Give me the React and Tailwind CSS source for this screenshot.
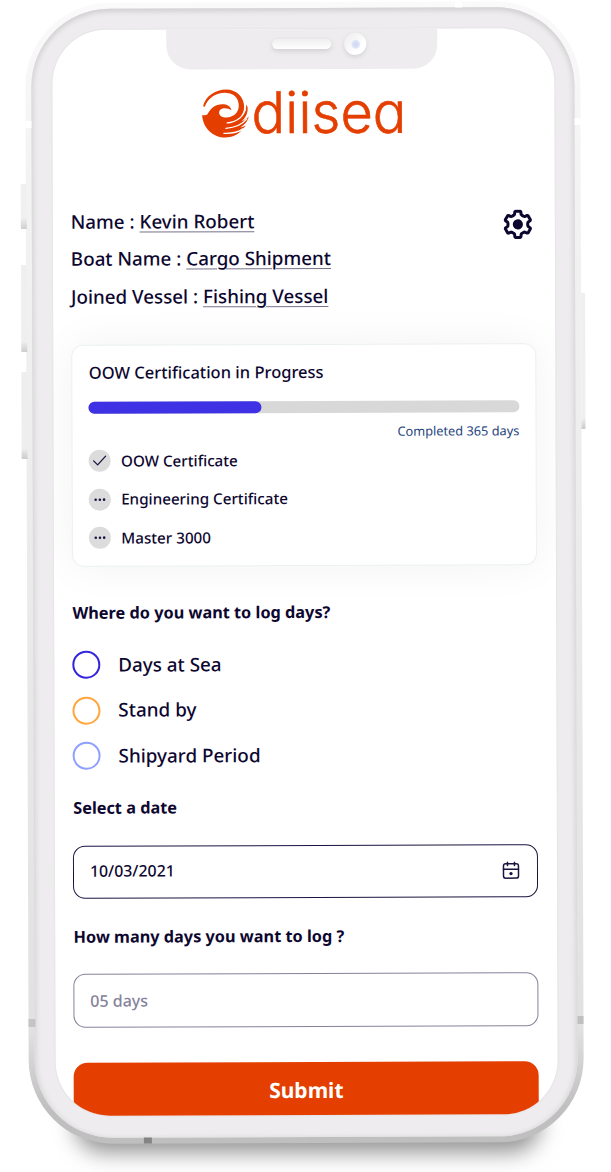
import React from "react";

const profile = [
  ["Name", "Kevin Robert"],
  ["Boat Name", "Cargo Shipment"],
  ["Joined Vessel", "Fishing Vessel"],
];

const certificates = [
  { name: "OOW Certificate", done: true },
  { name: "Engineering Certificate", done: false },
  { name: "Master 3000", done: false },
];

const dayTypes = [
  { name: "Days at Sea", ring: "border-[#3424dc]" },
  { name: "Stand by", ring: "border-[#ffa63c]" },
  { name: "Shipyard Period", ring: "border-[#8f9fff]" },
];

function LogoMark() {
  return (
    <svg viewBox="600 262 150 153" className="h-[51px] w-[50px] shrink-0" aria-hidden="true">
      <path
        fill="#e43e00"
        d="M608 316C614 286 645 266 677 266C710 266 731 290 731 318C731 330 727 339 721 346C731 337 737 326 738 311C743 318 743 330 738 342C734 350 729 357 723 362C733 357 740 352 745 348C742 361 733 372 719 380C725 379 730 377 736 374C729 384 718 390 706 394L722 390C710 403 693 410 675 410C638 410 607 382 605 342C611 343 617 343 621 340C630 322 645 310 665 310C680 310 690 316 693 328C684 321 669 319 660 326C652 334 656 346 669 349C694 353 715 339 715 314C715 291 700 277 678 276C650 274 625 288 613 317Z"
      />
      <g fill="none" stroke="#fff" strokeLinecap="round">
        <path strokeWidth="4.2" d="M680 366C705 364 727 350 735 325" />
        <path strokeWidth="3.8" d="M676 382C703 380 726 370 739 354" />
        <path strokeWidth="3.8" d="M670 397C693 398 713 394 727 384" />
      </g>
    </svg>
  );
}

const toothCorners = [
  [-4.3, -8.9],
  [-3.3, -9.8],
  [-3, -12.5],
  [-2.4, -13.1],
  [2.4, -13.1],
  [3, -12.5],
  [3.3, -9.8],
  [4.3, -8.9],
];

const gearPoints = [0, 60, 120, 180, 240, 300]
  .flatMap((deg) => {
    const a = (deg * Math.PI) / 180;
    return toothCorners.map(
      ([x, y]) =>
        `${(x * Math.cos(a) - y * Math.sin(a)).toFixed(2)},${(x * Math.sin(a) + y * Math.cos(a)).toFixed(2)}`
    );
  })
  .join(" ");

function GearIcon() {
  return (
    <svg viewBox="-15 -15 30 30" className="size-[30px]" aria-hidden="true">
      <polygon points={gearPoints} fill="none" stroke="#0d0730" strokeWidth="3" strokeLinejoin="round" />
      <circle r="5.1" fill="#0d0730" />
    </svg>
  );
}

function CalendarIcon() {
  return (
    <svg viewBox="0 0 18 18" className="size-[18px]" fill="none" stroke="#1b1440" strokeWidth="1.5" strokeLinecap="round" aria-hidden="true">
      <rect x="1.5" y="2.5" width="15" height="14.3" rx="2.2" />
      <path d="M1.5 8h15M5.5 1v3.2M12.5 1v3.2" />
      <circle cx="9" cy="12.3" r="1.7" fill="#1b1440" stroke="none" />
    </svg>
  );
}

function StatusDot({ done }) {
  return (
    <span className="flex size-[22px] items-center justify-center rounded-full bg-[#dcdcdc]">
      <svg viewBox="0 0 22 22" className="size-[22px]" aria-hidden="true">
        {done ? (
          <path d="M5 11.2L9 15.2L17 6.5" fill="none" stroke="#1b1440" strokeWidth="1.3" strokeLinecap="round" strokeLinejoin="round" />
        ) : (
          <g fill="#1b1440">
            <circle cx="6.9" cy="11" r="1.3" />
            <circle cx="11.1" cy="11" r="1.3" />
            <circle cx="15.3" cy="11" r="1.3" />
          </g>
        )}
      </svg>
    </span>
  );
}

function Hardware() {
  return (
    <>
      <div className="absolute -left-[5px] top-[181px] h-[45px] w-[5.5px] rounded-l-[1px] bg-linear-to-b from-[#f0f0f0] from-75% to-[#cfcfcf]" />
      <div className="absolute -left-[5px] top-[262px] h-[87px] w-[5.5px] rounded-l-[1px] bg-linear-to-b from-[#efefef] from-88% to-[#cdcdcd]" />
      <div className="absolute -left-[5px] top-[369px] h-[87px] w-[5.5px] rounded-l-[1px] bg-linear-to-b from-[#eeeeee] from-88% to-[#cbcbcb]" />
      <div className="absolute -right-[4px] top-[292px] h-[136px] w-[4.5px] rounded-r-[1px] bg-linear-to-b from-[#efefef] from-92% to-[#c9c9c9]" />
      <div className="absolute left-0 top-[117.5px] h-[7px] w-[6px] bg-white" />
      <div className="absolute right-0 top-[116.5px] h-[7px] w-[6px] bg-white" />
      <div className="absolute left-[430px] top-0 h-[6px] w-[7px] bg-white" />
      <div className="absolute left-0 top-[1015.5px] h-[8px] w-[6.5px] bg-[#c4c4c4]" />
      <div className="absolute right-0 top-[1014.5px] h-[8px] w-[6.5px] bg-[#c0c0c0]" />
      <div className="absolute bottom-0 left-[115px] h-[6px] w-[7.5px] bg-[#848484]" />
    </>
  );
}

function Notch() {
  return (
    <div className="absolute left-[114.3px] top-0 flex h-[40px] w-[271px] rounded-b-[24px] bg-[#eeecee] pl-[106px] pt-[9px]">
      <div className="mt-[1px] h-[10px] w-[59px] rounded-full bg-linear-to-b from-[#efeff0] to-white shadow-[0_2px_5px_#cfcdcf]" />
      <div className="-mt-[5px] ml-[13.5px] flex size-[22px] items-center justify-center rounded-full bg-linear-to-br from-[#ececec] to-white to-70% shadow-[0_2px_4px_#d3d1d3]">
        <div className="size-[9px] rounded-full bg-radial from-[#ccd3f0] to-[#eef3fd]" />
      </div>
    </div>
  );
}

export default function App() {
  return (
    <div className="relative h-[1172px] w-[611px] overflow-hidden bg-white pl-[27px] pt-[1.5px] font-['Noto_Sans',sans-serif] text-[#0d0730]">
      <div className="absolute left-[75px] top-[1095px] h-[57px] w-[465px] rounded-[40px] bg-[#8f8f8f] blur-[11px]" />
      <div className="relative h-[1140.5px] w-[555px] -rotate-[0.19deg]">
        <div className="h-full w-full rounded-[84px] p-[6px] [background-image:linear-gradient(to_bottom,#fafafa_0%,#f3f3f3_15%,#ebebeb_50%,#e1e1e1_90%,#bfbfbf_97%)]">
          <div className="h-full w-full rounded-[78px] bg-[#eeecee] px-[20.5px] pb-[22px] pt-[21.2px] shadow-[inset_0_3px_5px_#d3d1d3,inset_3px_0_4px_#e3e2e3,inset_-3px_0_4px_#e3e2e3]">
            <main className="relative flex h-full w-full flex-col overflow-hidden rounded-[54px] bg-white pl-[18.9px] pr-[18.7px] pt-[58.8px] shadow-[0_0_2px_#d8d6d8]">
              <Notch />

              <header className="flex h-[51px] items-center pl-[129.7px]">
                <LogoMark />
                <span className="ml-[1px] origin-bottom scale-y-[1.02] whitespace-nowrap font-['Inter',sans-serif] text-[56px] font-light leading-[51px] text-[#e43e00] [-webkit-text-stroke:0.6px_#e43e00] [font-feature-settings:'cv11']">
                  diisea
                </span>
              </header>

              <section className="mt-[63.8px] flex justify-between">
                <div className="-ml-[0.5px] flex flex-col text-[18.8px] font-medium leading-[37.4px]">
                  {profile.map(([label, value]) => (
                    <p key={label}>
                      {label} :{" "}
                      <span className="underline decoration-[#77738c] decoration-1 underline-offset-[2.5px]">{value}</span>
                    </p>
                  ))}
                </div>
                <button className="mr-[3px] mt-[7px] h-[30px]" aria-label="Settings">
                  <GearIcon />
                </button>
              </section>

              <section className="mt-[28.7px] h-[222px] shrink-0 rounded-[12px] border border-[#ebf0f2] bg-white px-[16px] pt-[17.4px] shadow-[0_0_44px_#0000000e]">
                <h2 className="text-[16.5px] font-medium leading-[20px]">OOW Certification in Progress</h2>
                <div className="mt-[19px] h-[11.5px] w-full rounded-full bg-[#d8d8d8]">
                  <div className="h-full w-[40%] rounded-full bg-[#3e32e4]" />
                </div>
                <p className="mt-[8px] text-right text-[12.77px] leading-[20px] text-[#1f4480]">Completed 365 days</p>
                <ul className="mt-[8.6px] flex flex-col gap-[16.4px]">
                  {certificates.map((c) => (
                    <li key={c.name} className="flex h-[22px] items-center gap-[10px] text-[15.2px] font-medium">
                      <StatusDot done={c.done} />
                      {c.name}
                    </li>
                  ))}
                </ul>
              </section>

              <h3 className="mt-[36.5px] text-[16.3px] font-bold leading-[20px]">Where do you want to log days?</h3>
              <div className="mt-[27.8px] flex flex-col gap-[17.6px]">
                {dayTypes.map((d) => (
                  <label key={d.name} className="flex h-[28px] items-center gap-[17.5px] text-[18.85px] font-medium">
                    <span className={`size-[28px] rounded-full border-2 ${d.ring}`} />
                    {d.name}
                  </label>
                ))}
              </div>

              <h3 className="mt-[27.5px] text-[16.3px] font-bold leading-[20px]">Select a date</h3>
              <div className="mt-[28px] flex h-[53.5px] shrink-0 items-center justify-between rounded-[12px] border-[1.5px] border-[#1b1440] pl-[15.5px] pr-[17px] text-[15.9px] font-medium">
                <span>10/03/2021</span>
                <CalendarIcon />
              </div>

              <h3 className="mt-[28.1px] text-[16.3px] font-bold leading-[20px]">How many days you want to log ?</h3>
              <div className="mt-[27.2px] flex h-[53.7px] shrink-0 items-center rounded-[12px] border border-[#85829a] pl-[15.5px] text-[16px] font-medium text-[#85829a]">
                05 days
              </div>

              <button className="mt-[35.3px] h-[57px] shrink-0 rounded-[14px] bg-[#e43e00] text-[21px] font-bold leading-[57px] text-white">
                Submit
              </button>
            </main>
          </div>
        </div>
        <Hardware />
      </div>
    </div>
  );
}
